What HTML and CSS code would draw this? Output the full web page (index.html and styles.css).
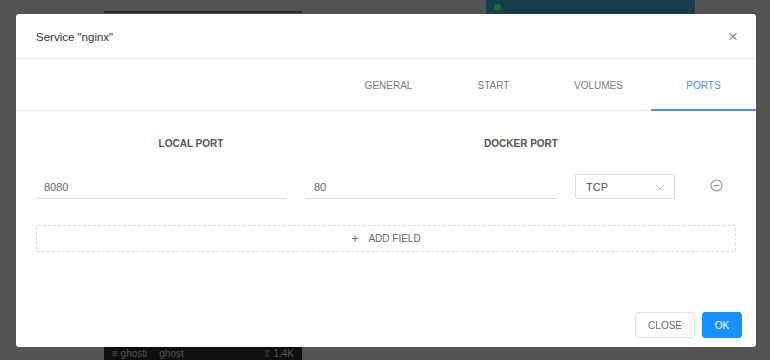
FILE: index.html
```html
<!DOCTYPE html>
<html lang="en">
<head>
  <meta charset="UTF-8" />
  <title>Service "nginx"</title>
  <link rel="stylesheet" href="styles.css">
</head>
<body>
  <div class="backdrop">
    <div class="bg-card bg-card-top"></div>
    <div class="bg-card bg-card-blue"><span class="dot"></span></div>
    <div class="bg-card bg-card-bottom">
      <span class="bg-name">≡ ghosti</span>
      <span class="bg-sub">ghost</span>
      <span class="bg-count">⇧ 1.4K</span>
    </div>
  </div>

  <div class="modal">
    <div class="modal-header">
      <span class="modal-title">Service "nginx"</span>
      <span class="modal-close">×</span>
    </div>

    <div class="tabs">
      <div class="tab">GENERAL</div>
      <div class="tab">START</div>
      <div class="tab">VOLUMES</div>
      <div class="tab active">PORTS</div>
    </div>

    <div class="modal-body">
      <div class="col-heads">
        <div class="col-head local">LOCAL PORT</div>
        <div class="col-head docker">DOCKER PORT</div>
      </div>

      <div class="port-row">
        <div class="field wide">8080</div>
        <div class="field wide">80</div>
        <div class="select">
          <span>TCP</span>
          <svg width="10" height="6" viewBox="0 0 10 6"><path d="M1 1l4 4 4-4" fill="none" stroke="#c8c8c8" stroke-width="1"/></svg>
        </div>
        <div class="remove">
          <svg width="13" height="13" viewBox="0 0 13 13"><circle cx="6.5" cy="6.5" r="5.5" fill="none" stroke="#8c8c8c" stroke-width="1.1"/><path d="M3.8 6.5h5.4" stroke="#8c8c8c" stroke-width="1.1"/></svg>
        </div>
      </div>

      <div class="add-field"><span class="plus">+</span>ADD FIELD</div>
    </div>

    <div class="modal-footer">
      <button class="btn">CLOSE</button>
      <button class="btn primary">OK</button>
    </div>
  </div>
</body>
</html>
```

FILE: styles.css
```css
* {
  box-sizing: border-box;
  margin: 0;
  padding: 0;
}

body {
  font-family: 'Liberation Sans', Arial, sans-serif;
  width: 770px;
  height: 360px;
  overflow: hidden;
  background: #545454;
  position: relative;
}

.backdrop {
  position: absolute;
  inset: 0;
}

.bg-card {
  position: absolute;
}

.bg-card-top {
  left: 104px;
  top: 0;
  width: 198px;
  height: 13px;
  border-bottom: 2px solid #22292c;
}

.bg-card-blue {
  left: 486px;
  top: 0;
  width: 209px;
  height: 14px;
  background: #163d4c;
}

.dot {
  position: absolute;
  left: 8px;
  top: 4px;
  width: 7px;
  height: 7px;
  border-radius: 50%;
  background: #1f6b33;
}

.bg-card-bottom {
  left: 104px;
  top: 346px;
  width: 198px;
  height: 14px;
  background: #0f0f0f;
  color: #555;
  font-size: 10px;
  display: flex;
  gap: 12px;
  padding: 2px 8px;
}

.bg-count {
  margin-left: auto;
}

.modal {
  position: absolute;
  left: 16px;
  top: 14px;
  width: 740px;
  height: 333px;
  background: #fff;
  border-radius: 3px;
  display: flex;
  flex-direction: column;
}

.modal-header {
  height: 45px;
  border-bottom: 1px solid #ececec;
  display: flex;
  align-items: center;
  justify-content: space-between;
  padding: 1px 18px 0 20px;
}

.modal-title {
  font-size: 11.5px;
  color: #333;
}

.modal-close {
  font-size: 17px;
  color: #8c8c8c;
  line-height: 1;
}

.tabs {
  height: 52px;
  border-bottom: 1px solid #ececec;
  display: flex;
  justify-content: flex-end;
}

.tab {
  width: 105px;
  display: flex;
  align-items: center;
  justify-content: center;
  font-size: 10px;
  color: #7a7a7a;
  border-bottom: 2px solid transparent;
  margin-bottom: -1px;
  padding-top: 2px;
}

.tab.active {
  color: #4a90e2;
  border-bottom-color: #4a90e2;
}

.modal-body {
  padding: 27px 20px 0;
}

.col-heads {
  display: flex;
}

.col-head {
  text-align: center;
  font-size: 10px;
  font-weight: bold;
  color: #555;
}

.col-head.local {
  width: 310px;
}

.col-head.docker {
  width: 350px;
}

.port-row {
  display: flex;
  align-items: center;
  margin-top: 25px;
}

.field {
  height: 25px;
  border-bottom: 1px solid #dcdcdc;
  font-size: 11px;
  color: #666;
  display: flex;
  align-items: center;
  padding-left: 8px;
  padding-top: 2px;
}

.field.wide {
  width: 250px;
  margin-right: 20px;
}

.field.wide + .field.wide {
  width: 251px;
  margin-right: 18px;
}

.select {
  width: 100px;
  height: 25px;
  border: 1px solid #dcdcdc;
  border-radius: 2px;
  display: flex;
  align-items: center;
  justify-content: space-between;
  padding: 0 9px 0 10px;
  font-size: 11px;
  color: #555;
}

.remove {
  margin-left: 35px;
  display: flex;
  margin-top: -3px;
}

.add-field {
  margin-top: 26px;
  height: 27px;
  border: 1px dashed #dadada;
  border-radius: 2px;
  display: flex;
  align-items: center;
  justify-content: center;
  font-size: 10px;
  color: #666;
}

.plus {
  font-size: 12px;
  margin-right: 10px;
}

.modal-footer {
  margin-top: auto;
  display: flex;
  justify-content: flex-end;
  gap: 7px;
  padding: 0 14px 9px 0;
}

.btn {
  height: 26px;
  padding: 0 12px;
  border: 1px solid #e3e3e3;
  border-radius: 3px;
  background: #fff;
  font-family: inherit;
  font-size: 10px;
  color: #666;
}

.btn.primary {
  background: #1890ff;
  border-color: #1890ff;
  color: #fff;
  width: 40px;
  padding: 0;
}
```
